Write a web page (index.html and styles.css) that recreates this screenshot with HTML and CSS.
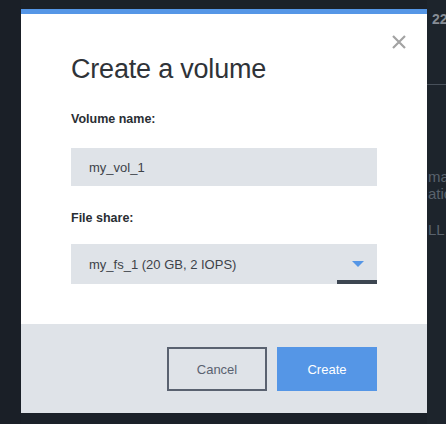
FILE: index.html
```html
<!DOCTYPE html>
<html>
<head>
<meta charset="utf-8">
<link rel="stylesheet" href="styles.css">
</head>
<body>
<div class="page">
  <div class="gutter"></div>
  <div class="modal">
    <div class="modal-body">
      <button class="close" aria-label="Close">
        <svg width="14" height="14" viewBox="0 0 14 14"><path d="M1 1 L13 13 M13 1 L1 13" stroke="#a3a3a3" stroke-width="2.2" fill="none"/></svg>
      </button>
      <h1 class="title">Create a volume</h1>
      <label class="label">Volume name:</label>
      <div class="field">my_vol_1</div>
      <label class="label label-second">File share:</label>
      <div class="field select">
        <span>my_fs_1 (20 GB, 2 IOPS)</span>
        <svg class="caret" width="12" height="6" viewBox="0 0 12 6"><path d="M0 0 L12 0 L6 6 Z" fill="#5596e6"/></svg>
        <span class="select-bar"></span>
      </div>
    </div>
    <div class="modal-footer">
      <button class="btn btn-secondary">Cancel</button>
      <button class="btn btn-primary">Create</button>
    </div>
  </div>
  <div class="side">
    <div class="side-num">22</div>
    <div class="side-rule"></div>
    <div class="side-text">ma<br>atio</div>
    <div class="side-text side-ll">LL</div>
  </div>
</div>
</body>
</html>
```

FILE: styles.css
```css
* { box-sizing: border-box; }
html, body {
  margin: 0;
  padding: 0;
  background: #1b2129;
  font-family: "Liberation Sans", Arial, sans-serif;
}
.page {
  display: flex;
  width: 446px;
  height: 424px;
  overflow: hidden;
  background: #1b2129;
}
.gutter {
  width: 21px;
  flex: none;
  background: #1a1f27;
}
.modal {
  width: 406px;
  flex: none;
  margin-top: 9px;
  align-self: flex-start;
  border-top: 5px solid #5596e6;
  display: flex;
  flex-direction: column;
}
.modal-body {
  position: relative;
  background: #ffffff;
  padding: 38px 50px 40px 50px;
  display: flex;
  flex-direction: column;
}
.close {
  position: absolute;
  top: 21px;
  right: 21px;
  width: 14px;
  height: 14px;
  padding: 0;
  border: 0;
  background: none;
  display: flex;
}
.title {
  margin: 0 0 26px 0;
  font-size: 27px;
  line-height: 34px;
  font-weight: normal;
  color: #2f3338;
  letter-spacing: -0.2px;
}
.label {
  font-size: 12.5px;
  line-height: 15px;
  font-weight: bold;
  color: #2a2e33;
  margin-bottom: 21px;
}
.label-second {
  margin-top: 25px;
  margin-bottom: 18px;
}
.field {
  position: relative;
  height: 38px;
  background: #dfe3e8;
  padding-left: 18px;
  display: flex;
  align-items: center;
  font-size: 13px;
  color: #3d4248;
}
.select {
  height: 40px;
  justify-content: space-between;
  padding-right: 13px;
}
.caret { display: block; }
.select-bar {
  position: absolute;
  right: 0;
  bottom: 0;
  width: 40px;
  height: 4px;
  background: #3d4651;
}
.modal-footer {
  background: #dfe3e8;
  padding: 23px 50px 22px 50px;
  display: flex;
  justify-content: flex-end;
  gap: 10px;
}
.btn {
  width: 100px;
  height: 44px;
  font-family: "Liberation Sans", Arial, sans-serif;
  font-size: 13px;
  border: 0;
  padding: 0;
}
.btn-secondary {
  background: transparent;
  border: 2px solid #5a6270;
  color: #5a6270;
}
.btn-primary {
  background: #5596e6;
  color: #ffffff;
}
.side {
  flex: 1;
  background: #1d242c;
  padding-top: 12px;
  padding-left: 5px;
  overflow: hidden;
  white-space: nowrap;
}
.side-num {
  font-size: 14px;
  font-weight: bold;
  color: #868c95;
  line-height: 15px;
}
.side-rule {
  height: 1px;
  background: #48505a;
  margin: 57px 0 0 -5px;
}
.side-text {
  margin: 83px 0 0 -4px;
  font-size: 15px;
  line-height: 17px;
  color: #59626d;
}
.side-ll {
  margin-top: 19px;
}
```
